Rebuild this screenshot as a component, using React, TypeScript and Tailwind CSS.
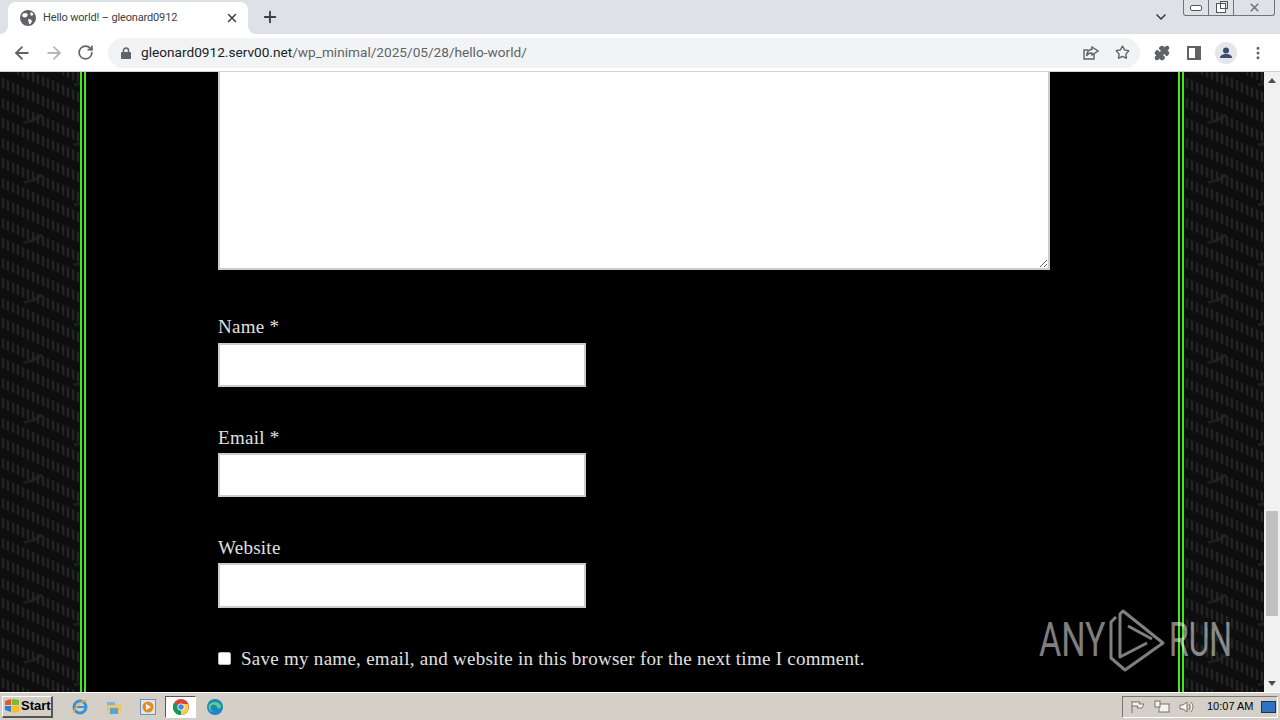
import { ArrowLeft, ArrowRight, RotateCw, Star, Puzzle, X, Plus, ChevronDown, MoreVertical } from "lucide-react";

function Texture({ id }: { id: string }) {
  return (
    <svg className="h-full w-full" aria-hidden="true">
      <defs>
        <pattern id={id} width="50" height="60" patternUnits="userSpaceOnUse" patternTransform="skewY(24)">
          <rect width="50" height="60" fill="#0e0e0e" />
          <g stroke="#282828" strokeWidth="2">
            <path d="M3 5v10M8 5v10M13 5v10M18 5v10M23 5v10M28 5v10M33 5v10M38 5v10M43 5v10M48 5v10" />
            <path d="M3 25v10M8 25v10M13 25v10M18 25v10M23 25v10M28 25v10M33 25v10M38 25v10M43 25v10M48 25v10" />
            <path d="M3 45v10M8 45v10M13 45v10M18 45v10M23 45v10M28 45v10M33 45v10M38 45v10M43 45v10M48 45v10" />
          </g>
          <path d="M24 40q10 -6 18 -16" stroke="#242424" strokeWidth="2" fill="none" />
        </pattern>
      </defs>
      <rect width="100%" height="100%" fill={`url(#${id})`} />
    </svg>
  );
}

function Field({ label, last, low }: { label: string; last?: boolean; low?: boolean }) {
  return (
    <div className="mb-[36px]">
      <label className={`block h-[30px] text-[19px] tracking-[0.27px] text-[#e0e0e0] ${low ? "leading-[30px]" : "leading-[28px]"}`}>{label}</label>
      <input className={`block w-[368px] border-2 border-[#ccc] bg-white ${last ? "h-[45px]" : "h-[44px]"}`} />
    </div>
  );
}

function ChromeLogo() {
  return (
    <svg width="16" height="16" viewBox="0 0 16 16">
      <circle cx="8" cy="8" r="8" fill="#db4437" />
      <path d="M8 8 1 12a8 8 0 0 1 0-8l3 2z" fill="#0f9d58" />
      <path d="M8 8 1 12a8 8 0 0 0 7 4h1l3-6z" fill="#0f9d58" />
      <path d="M8 5h7a8 8 0 0 1-7 11z" fill="#ffcd40" />
      <circle cx="8" cy="8" r="3.6" fill="#fff" />
      <circle cx="8" cy="8" r="2.8" fill="#4285f4" />
    </svg>
  );
}

export default function App() {
  return (
    <div className="relative flex h-[720px] w-[1280px] flex-col overflow-hidden bg-black font-['Liberation_Serif',serif]">
      {/* tab strip */}
      <div className="relative flex h-[34px] shrink-0 items-end bg-[#dee1e6] pl-[8px] font-['Roboto',sans-serif]">
        <div className="relative flex h-[32px] w-[240px] items-center rounded-t-[8px] bg-white pl-[12px] pr-[9px]">
          <div className="absolute -left-[8px] bottom-0 h-[8px] w-[8px] bg-white">
            <div className="h-full w-full rounded-br-[8px] bg-[#dee1e6]" />
          </div>
          <div className="absolute -right-[8px] bottom-0 h-[8px] w-[8px] bg-white">
            <div className="h-full w-full rounded-bl-[8px] bg-[#dee1e6]" />
          </div>
          <svg width="16" height="16" viewBox="0 0 16 16" className="shrink-0">
            <circle cx="8" cy="8" r="8" fill="#5f6368" />
            <path d="M3 3.5 6 3l2 1.5L6.5 7 4 7.5 2 6zM8 9l3 .5 1 2-2 3-1-1zM11 2l2.5 2L12 6l-2-1.5z" fill="#fff" />
          </svg>
          <span className="ml-[7px] flex-1 text-[11px] tracking-[-0.15px] text-[#3c4043]">Hello world! – gleonard0912</span>
          <X size={14} strokeWidth={2.5} className="text-[#3c4043]" />
        </div>
        <Plus size={18} strokeWidth={2.5} className="mb-[8px] ml-[13px] text-[#3c4043]" />
        <ChevronDown size={16} strokeWidth={2.5} className="absolute right-[111px] top-[9px] text-[#3c4043]" />
        {/* window buttons */}
        <div className="absolute right-[5px] top-0 flex h-[16px] w-[92px] rounded-b-[3px] border border-t-0 border-[#6f7479] bg-[#dee1e6]">
          <div className="flex w-[25px] items-center justify-center border-r border-[#6f7479]">
            <div className="h-[6px] w-[12px] rounded-[2px] border border-[#555] bg-white" />
          </div>
          <div className="flex w-[25px] items-center justify-center border-r border-[#6f7479]">
            <div className="relative h-[10px] w-[10px] border border-[#555] bg-white">
              <div className="absolute -right-[3px] -top-[3px] h-[8px] w-[8px] border border-[#555]" />
            </div>
          </div>
          <div className="flex flex-1 items-center justify-center">
            <X size={13} strokeWidth={3} className="text-[#777]" />
          </div>
        </div>
      </div>

      {/* toolbar */}
      <div className="flex h-[38px] shrink-0 items-center border-b border-[#d0d1d3] bg-white font-['Roboto',sans-serif]">
        <ArrowLeft size={20} strokeWidth={2.2} className="ml-[12px] text-[#5f6368]" />
        <ArrowRight size={20} strokeWidth={2.2} className="ml-[12px] text-[#b5b8bb]" />
        <RotateCw size={17} strokeWidth={2.4} className="ml-[13px] text-[#5f6368]" />
        <div className="ml-[14px] flex h-[30px] w-[1032px] items-center rounded-full bg-[#f1f3f4] pl-[12px] pr-[10px]">
          <svg width="12" height="12" viewBox="0 0 12 12" fill="#5f6368">
            <path d="M2 5h8a1 1 0 0 1 1 1v5a1 1 0 0 1-1 1H2a1 1 0 0 1-1-1V6a1 1 0 0 1 1-1z" />
            <path d="M3.5 5V3.5a2.5 2.5 0 0 1 5 0V5" fill="none" stroke="#5f6368" strokeWidth="1.5" />
          </svg>
          <span className="ml-[9px] flex-1 text-[13.65px] text-[#202124]">
            gleonard0912.serv00.net<span className="text-[#5f6368]">/wp_minimal/2025/05/28/hello-world/</span>
          </span>
          <svg width="16" height="16" viewBox="0 0 16 16" fill="none" stroke="#5f6368" strokeWidth="1.4">
            <path d="M11 9v5H1V5h4" />
            <path d="M9 2l6 4-6 4V8C6 8 4.500 9 3.500 11 4 7 6 4.500 9 4.300z" />
          </svg>
          <Star size={15} strokeWidth={2.2} className="ml-[16px] text-[#5f6368]" />
        </div>
        <Puzzle size={16} fill="#5f6368" className="ml-[14px] text-[#5f6368]" />
        <div className="ml-[17px] flex h-[14px] w-[14px] justify-end border-2 border-[#5f6368]">
          <div className="h-full w-[4px] bg-[#5f6368]" />
        </div>
        <svg width="22" height="22" viewBox="0 0 22 22" className="ml-[14px]">
          <circle cx="11" cy="11" r="11" fill="#e4e6ea" />
          <circle cx="11" cy="8.5" r="3" fill="#3c4a6b" />
          <path d="M5 16c0-3 3-4 6-4s6 1 6 4z" fill="#3c4a6b" />
        </svg>
        <MoreVertical size={16} strokeWidth={2.5} className="ml-[13px] text-[#5f6368]" />
      </div>

      {/* page */}
      <div className="relative flex min-h-0 flex-1">
        <div className="w-[80px] shrink-0"><Texture id="weave-left" /></div>
        <main className="w-[1104px] shrink-0 border-x-[6px] border-double border-[#3fe81a] bg-black pl-[132px]">
          <textarea className="block h-[198px] w-[832px] border-2 border-t-0 border-[#ccc] bg-white" />
          <div className="h-[43px]" />
          <Field label="Name *" />
          <Field label="Email *" low />
          <Field label="Website" last low />
          <div className="mt-[1px] flex items-center">
            <input type="checkbox" className="h-[13px] w-[13px] appearance-none rounded-[2px] border border-[#bbb] bg-white" />
            <span className="relative top-[1px] ml-[10px] text-[19px] leading-[28px] tracking-[0.27px] text-[#e0e0e0]">
              Save my name, email, and website in this browser for the next time I comment.
            </span>
          </div>
        </main>
        <div className="w-[80px] shrink-0"><Texture id="weave-right" /></div>
        <div className="flex w-[16px] shrink-0 flex-col items-center bg-[#f1f1f1]">
          <div className="mt-[6px] h-0 w-0 border-x-[4px] border-b-[5px] border-x-transparent border-b-[#505050]" />
          <div className="mt-[428px] h-[105px] w-[12px] bg-[#c1c1c1]" />
          <div className="mt-[65px] h-0 w-0 border-x-[4px] border-t-[5px] border-x-transparent border-t-[#505050]" />
        </div>

        {/* watermark */}
        <div className="pointer-events-none absolute left-[1039px] top-[536px] flex h-[64px] items-center font-['Roboto',sans-serif] text-white/50">
          <span className="w-[62px] origin-left scale-x-[0.71] text-[48px] leading-none">ANY</span>
          <svg width="60" height="64" viewBox="0 0 60 64" fill="none" stroke="rgba(255,255,255,0.5)" strokeWidth="3" strokeLinejoin="round" className="ml-[7px]">
            <path d="M8 9 3 14v36l14 12 38-27L15 3l-3 3v43l27-14M20 18l24 13" />
          </svg>
          <span className="ml-[1px] w-[62px] origin-left scale-x-[0.665] text-[48px] leading-none">RUN</span>
        </div>
      </div>

      {/* taskbar */}
      <div className="flex h-[28px] shrink-0 items-center border-t border-white bg-[#d4d0c8] pl-[2px] font-['Liberation_Sans',sans-serif]">
        <button className="flex h-[22px] w-[51px] items-center border border-b-2 border-r-2 border-white border-b-[#555] border-r-[#555] pl-[1px] text-[13px] font-bold text-black">
          <svg width="16" height="16" viewBox="0 0 16 16" className="mr-[1px]">
            <path d="M1 3 7 1v6H1z" fill="#e8562a" />
            <path d="M8 1l7 1v5H8z" fill="#7fba2c" />
            <path d="M1 8h6v6l-6-2z" fill="#2a7fd6" />
            <path d="M8 8h7v6l-7 1z" fill="#f5bf1f" />
          </svg>
          Start
        </button>
        <svg width="18" height="18" viewBox="0 0 18 18" className="ml-[18px]">
          <circle cx="9" cy="9" r="6" fill="none" stroke="#3e8fd8" strokeWidth="3" />
          <path d="M4 9h10" stroke="#3e8fd8" strokeWidth="2" />
          <path d="M2 15C5 8 10 3 16 2" stroke="#e9b83c" strokeWidth="1.5" fill="none" />
        </svg>
        <svg width="16" height="16" viewBox="0 0 16 16" className="ml-[17px]">
          <path d="M1 5h14v10H1z" fill="#e8c674" />
          <path d="M1 3h8v3H1z" fill="#7fb7d6" />
          <path d="M4 9h8v6H4z" fill="#5aa3cf" />
        </svg>
        <svg width="16" height="16" viewBox="0 0 16 16" className="ml-[18px]">
          <rect x="0.5" y="0.5" width="15" height="15" fill="#dbe6f0" stroke="#6d94bd" />
          <circle cx="8" cy="8" r="5.5" fill="#ea8a1e" />
          <path d="M6 5v6l5-3z" fill="#fff" />
        </svg>
        <div className="ml-[9px] flex h-[22px] w-[31px] items-center justify-center border border-b-white border-l-[#555] border-r-white border-t-[#555] bg-white">
          <ChromeLogo />
        </div>
        <svg width="16" height="16" viewBox="0 0 16 16" className="ml-[11px]">
          <circle cx="8" cy="8" r="8" fill="#1b87c9" />
          <path d="M2 6c3-4 10-4 12 1 .5 2-2 3-4 2 1-2-2-4-5-3-2 1-2 5 1 7-3 0-5-4-4-7z" fill="#5fd36c" />
        </svg>
        <div className="ml-auto mr-[2px] flex h-[22px] w-[156px] items-center border border-b-white border-l-[#777] border-r-white border-t-[#777] pl-[7px]">
          <svg width="16" height="14" viewBox="0 0 16 14" fill="#f4f3ee" stroke="#77756d"><path d="M2 1v12M2 2h8l-1 2 5 0-2 4H7l1-2H2" /></svg>
          <svg width="16" height="14" viewBox="0 0 16 14" fill="#f4f3ee" stroke="#77756d" className="ml-[8px]"><rect x="5" y="4" width="10" height="8" /><rect x="1" y="1" width="5" height="6" /></svg>
          <svg width="16" height="14" viewBox="0 0 16 14" fill="#f4f3ee" stroke="#77756d" className="ml-[8px]"><path d="M2 5h3l4-3v10l-4-3H2zM11 4q2 3 0 6M13 2q4 5 0 10" /></svg>
          <span className="ml-[13px] w-[48px] whitespace-nowrap text-[11px] text-black">10:07 AM</span>
          <div className="ml-[6px] h-[12px] w-[15px] border border-[#234] bg-[#2f74c0]" />
        </div>
      </div>
    </div>
  );
}
